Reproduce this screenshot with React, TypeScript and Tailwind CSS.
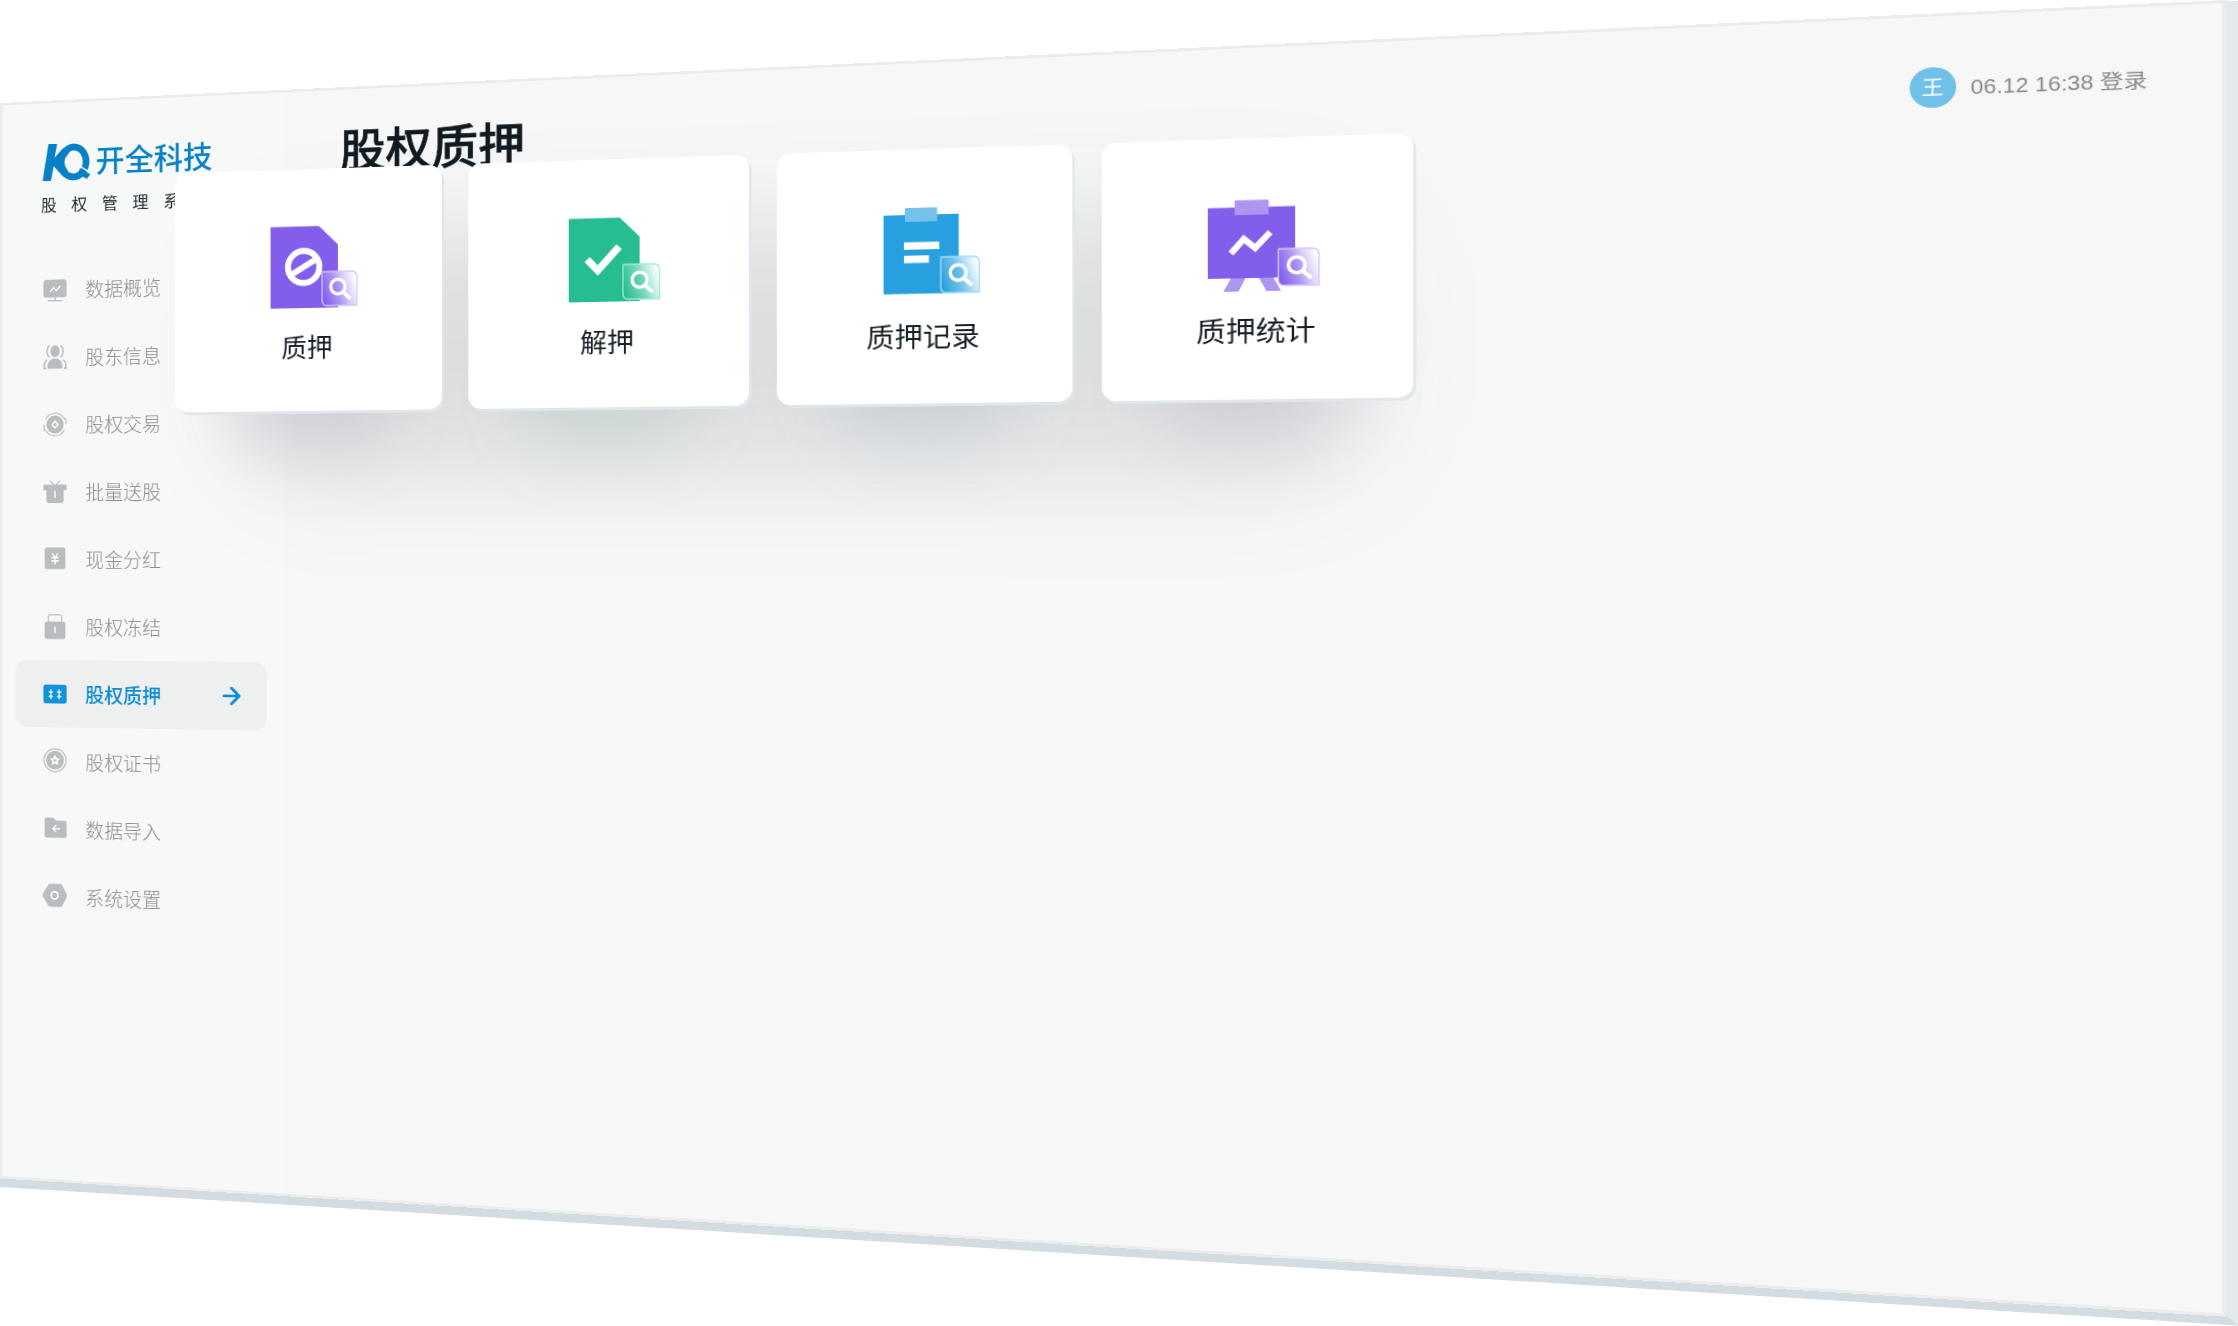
import React from "react";

const font = "font-['Liberation_Sans','Noto_Sans_CJK_SC',sans-serif]";

/* Projects a w×h plane onto a trapezoid whose left and right sides are vertical. */
function project(
  w: number,
  h: number,
  x0: number,
  x1: number,
  left: [number, number],
  right: [number, number]
) {
  const hl = left[1] - left[0];
  const k = hl / (right[1] - right[0]);
  const p = -(1 - k) / w;
  const a = ((x1 - x0) * k) / w + x0 * p;
  const b = (k * right[0] - left[0]) / w;
  return `matrix3d(${a},${b},0,${p},0,${hl / h},0,0,0,0,1,0,${x0},${left[0]},0,1)`;
}

const G = "#b9bdc0";

function MenuIcon({ name }: { name: string }) {
  return (
    <svg viewBox="0 0 28 28" className="h-7 w-7 shrink-0 overflow-visible">
      {name === "数据概览" && (
        <>
          <rect x="0" y="2" width="28" height="21" rx="3.500" fill={G} />
          <path d="M5 26.700H23M14 22V27" stroke={G} strokeWidth="1.600" />
          <path d="M8 16L12.500 11.500L15.500 15L20.500 9.500" stroke="#fff" strokeWidth="1.600" fill="none" />
        </>
      )}
      {name === "股东信息" && (
        <>
          <ellipse cx="14" cy="7" rx="5.600" ry="7" fill={G} />
          <path d="M4.800 27.500V25Q5.500 15.500 14 15.500Q22.500 15.500 23.200 25V27.500Z" fill={G} />
          <path d="M7.500 .5C3 3 3 11 7.500 14M20.500 .5C25 3 25 11 20.500 14M4.500 17C1 19 .5 23 .8 27H3M23.500 17C27 19 27.500 23 27.200 27H25" stroke={G} strokeWidth="1.900" fill="none" />
        </>
      )}
      {name === "股权交易" && (
        <>
          <circle cx="14" cy="14" r="10.500" fill={G} />
          <path d="M2.500 7.500A13.300 13.300 0 0 1 25.500 7.500M25.500 20.500A13.300 13.300 0 0 1 2.500 20.500M.8 14V20.500H3M27.200 14V7.500H25" stroke={G} strokeWidth="1.400" fill="none" />
          <path d="M14 10.300L17.700 14L14 17.700L10.300 14Z" stroke="#fff" strokeWidth="1.700" fill="none" />
        </>
      )}
      {name === "批量送股" && (
        <>
          <path d="M8 1L13 6M20 1L15 6" stroke={G} strokeWidth="1.600" />
          <path d="M1 5.500H27Q28 5.500 28 6.500V11Q28 12 27 12H24.500V24Q24.500 27 21.500 27H6.500Q3.500 27 3.500 24V12H1Q0 12 0 11V6.500Q0 5.500 1 5.500Z" fill={G} />
          <path d="M14 12.500V21" stroke="#fff" strokeWidth="1.500" />
        </>
      )}
      {name === "现金分红" && (
        <>
          <rect x="1.500" y="0" width="25" height="25.500" rx="3" fill={G} />
          <path d="M10.500 7L14 12L17.500 7M9.500 12.200H18.500M9.500 15.800H18.500M14 12V20" stroke="#fff" strokeWidth="1.700" fill="none" />
        </>
      )}
      {name === "股权冻结" && (
        <>
          <path d="M6 9V3Q6 0 9 0H19Q22 0 22 3V9" stroke={G} strokeWidth="1.400" fill="none" />
          <rect x="1.500" y="8" width="25" height="20.500" rx="3" fill={G} />
          <path d="M14 14V21.500" stroke="#fff" strokeWidth="1.500" />
        </>
      )}
      {name === "股权质押" && (
        <>
          <rect x="0" y="3" width="28" height="22" rx="3" fill="#1292da" />
          <path d="M9 8.500V20M19 8.500V20M6.500 11L9 13L11.500 11M6.500 17.500L9 15.500L11.500 17.500M16.500 11L19 13L21.500 11M16.500 17.500L19 15.500L21.500 17.500" stroke="#fff" strokeWidth="1.400" fill="none" />
        </>
      )}
      {name === "股权证书" && (
        <>
          <circle cx="14" cy="12.500" r="13.300" fill="none" stroke={G} strokeWidth="1.400" />
          <circle cx="14" cy="12.500" r="10.800" fill={G} />
          <path d="M14 8.300L15.300 11L18.200 11.400L16.100 13.500L16.600 16.500L14 15.100L11.400 16.500L11.900 13.500L9.800 11.400L12.700 11Z" stroke="#fff" strokeWidth="1.900" fill="none" />
        </>
      )}
      {name === "数据导入" && (
        <>
          <path d="M1.500 3.500Q1.500 1 4 1H11Q12.500 1 13.500 2.500L15 4.300H25Q28 4.300 28 7V21.500Q28 24.500 25 24.500H4.500Q1.500 24.500 1.500 21.500Z" fill={G} />
          <path d="M20 13.800H12M15.500 9.800L11.500 13.800L15.500 17.800" stroke="#fff" strokeWidth="1.600" fill="none" />
        </>
      )}
      {name === "系统设置" && (
        <>
          <path d="M8 -.5H20.500Q22 -.5 22.800 1L28 11Q28.800 13 28 15L22.800 25Q22 26.500 20.500 26.500H8Q6.500 26.500 5.700 25L-.5 15Q-1.500 13 -.5 11L5.700 1Q6.500 -.5 8 -.5Z" fill={G} />
          <circle cx="13.500" cy="13" r="4.200" stroke="#fff" strokeWidth="2" fill="none" />
        </>
      )}
    </svg>
  );
}

const menu = ["数据概览", "股东信息", "股权交易", "批量送股", "现金分红", "股权冻结", "股权质押", "股权证书", "数据导入", "系统设置"];

function Sidebar() {
  return (
    <aside className="flex w-[334px] shrink-0 flex-col bg-[#f7f9f8] pt-[44px]">
      <div className="flex h-[52px] items-center pl-[49px]">
        <svg viewBox="0 0 57 44" className="h-[44px] w-[57px] overflow-visible">
          <path d="M7 0H17.500L14.500 16L25 5L33 10L24 21L31 33L25 39L13.500 26L10 43H0Z" fill="#0680c7" />
          <ellipse cx="37.500" cy="22" rx="15" ry="17.500" fill="none" stroke="#0680c7" strokeWidth="8" />
          <path d="M46 28L58 35.500" stroke="#f7f9f8" strokeWidth="1.500" />
          <path d="M45 29.500L57.500 37L53.500 42.500L43 36Z" fill="#0680c7" />
        </svg>
        <span className="mt-[2px] ml-[7px] text-[34.700px] leading-none font-medium whitespace-nowrap text-[#0680c7]">开全科技</span>
      </div>
      <div className="mt-[13px] pl-[47px] text-[19px] leading-[24px] tracking-[17.700px] whitespace-nowrap text-[#1d262c]">股权管理系统</div>
      <nav className="mt-[46px] flex flex-col pl-[16px]">
        {menu.map((m) => {
          const on = m === "股权质押";
          return (
            <div key={m} className={on ? "flex h-[79px] w-[299px] items-center rounded-[14px] bg-[#eeefef] pl-[34px]" : "flex h-[79px] w-[299px] items-center pl-[34px]"}>
              <MenuIcon name={m} />
              <span className={on ? "mt-[3px] ml-[22.500px] text-[22.700px] leading-none font-medium whitespace-nowrap text-[#0c8bd6]" : "mt-[3px] ml-[22.500px] text-[22.700px] leading-none font-light whitespace-nowrap text-[#8a8d8e]"}>{m}</span>
              {on && (
                <svg viewBox="0 0 22 22" className="ml-[71.500px] h-[22px] w-[22px]">
                  <path d="M2 10.500H19M11 1.500L20 10.500L11 19.500" fill="none" stroke="#0c8bd6" strokeWidth="3.200" strokeLinecap="round" strokeLinejoin="round" />
                </svg>
              )}
            </div>
          );
        })}
      </nav>
    </aside>
  );
}

type Tone = { main: string; soft: string; edge: string };
const purple: Tone = { main: "#825eeb", soft: "#ad95f1", edge: "#d5c8fa" };
const green: Tone = { main: "#26bd93", soft: "#7fdcc0", edge: "#a5e8d3" };
const blue: Tone = { main: "#28a0df", soft: "#74c1e9", edge: "#a5dcf6" };

const cards = [
  { label: "质押", tone: purple, id: "a", glow: "bg-[#75688f]/14", shift: "-ml-[3px]" },
  { label: "解押", tone: green, id: "b", glow: "bg-[#5f9484]/14", shift: "-ml-[4px]" },
  { label: "质押记录", tone: blue, id: "c", glow: "bg-[#5f809a]/14", shift: "-ml-[2px]" },
  { label: "质押统计", tone: purple, id: "d", glow: "bg-[#75688f]/14", shift: "-ml-[1px]" },
];

function CardIcon({ id, tone }: { id: string; tone: Tone }) {
  return (
    <svg viewBox="0 0 120 100" className="h-[100px] w-[120px] overflow-visible">
      <defs>
        <linearGradient id={"g" + id} x1="0" y1=".65" x2="1" y2=".35">
          <stop offset="0" stopColor={tone.main} />
          <stop offset=".3" stopColor={tone.main} stopOpacity=".75" />
          <stop offset=".65" stopColor={tone.edge} />
          <stop offset="1" stopColor="#fff" />
        </linearGradient>
      </defs>
      {(id === "a" || id === "b") && <path d="M22 10.500H74.500L95 30.500V97H22Z" fill={tone.main} />}
      {id === "a" && (
        <g stroke="#fff" strokeWidth="6.500" fill="none">
          <circle cx="58" cy="53.500" r="17" />
          <path d="M44.500 61.500L71.500 45.500" />
        </g>
      )}
      {id === "b" && <path d="M41 53L52 64.500L74 40.500" stroke="#fff" strokeWidth="7.500" fill="none" />}
      {id === "c" && (
        <>
          <path d="M22 16H95.500V95.500H22Z" fill={tone.main} />
          <path d="M43 9H74.500V23H43Z" fill={tone.soft} />
          <path d="M42 43.500H76.500V51H42ZM42 57H66.500V64.500H42Z" fill="#fff" />
        </>
      )}
      {id === "d" && (
        <>
          <path d="M37.500 87H51L44.500 100H30.500ZM63.500 87H77L84 100H70.500Z" fill={tone.soft} />
          <path d="M16 17.500H97V87H16Z" fill={tone.main} />
          <path d="M41 10.500H72.500V25H41Z" fill={tone.soft} />
          <path d="M37.500 62.500L49.500 48.500L60 57.500L74 42.500" stroke="#fff" strokeWidth="6" fill="none" />
        </>
      )}
      <g transform={id === "d" ? "translate(3.5 .5)" : "translate(0 .5)"}>
        <path d="M79 58.500H109Q115.500 58.500 115.500 65V94.500H84Q78 94.500 78 88.500V59.500Q78 58.500 79 58.500Z" fill="#fff" />
        <path d="M79 58.500H109Q115.500 58.500 115.500 65V94.500H84Q78 94.500 78 88.500V59.500Q78 58.500 79 58.500Z" fill={`url(#g${id})`} stroke={tone.edge} strokeWidth="1.300" />
        <circle cx="95" cy="74.500" r="7.700" fill={tone.main} fillOpacity=".25" stroke="#fff" strokeWidth="3.400" />
        <path d="M100.500 80.500L108.500 87.500" stroke="#fff" strokeWidth="3.800" />
      </g>
    </svg>
  );
}

export default function App() {
  return (
    <div className={`relative h-[1326px] w-[2238px] overflow-hidden bg-white ${font}`}>
      <div className="absolute inset-0 bg-[#e4e9ec] [clip-path:polygon(2224px_1px,2238px_1px,2238px_1326px,2224px_1316px)]" />
      <div className="absolute inset-0 bg-[#d3dce0] [clip-path:polygon(0_1176px,2226px_1315px,2238px_1325.500px,0_1187px)]" />

      <div
        className="absolute top-0 left-0 flex h-[1268px] w-[2226px] origin-top-left border-[3.500px] border-[#ebedec] bg-[#f7f7f7]"
        style={{ transform: project(2226, 1268, 0, 2226, [103, 1178.5], [0, 1317]) }}
      >
        <Sidebar />
        <main className="flex grow items-start justify-between pt-[40px] pr-[61.500px] pl-[65.500px]">
          <h1 className="mt-[1px] text-[52px] leading-[60px] font-medium text-[#101a20] [-webkit-text-stroke:0.600px_#101a20]">股权质押</h1>
          <div className="flex h-[60px] items-center">
            <span className="flex h-10 w-10 items-center justify-center rounded-full bg-[#6fc1ea] text-[19px] leading-none text-white">王</span>
            <span className="mt-[4px] ml-[12.500px] text-[19.600px] leading-none whitespace-nowrap text-[#858889]">06.12 16:38 登录</span>
          </div>
        </main>
      </div>

      <div
        className="absolute top-0 left-0 isolate flex h-[256px] w-[1240px] origin-top-left gap-7"
        style={{ transform: project(1240, 256, 175, 1413.5, [173.5, 412.5], [133, 397.5]) }}
      >
        <div className="absolute top-[75px] right-[50px] left-[70px] -z-10 h-[250px] rounded-[80px] bg-[#282d3a]/13 blur-[54px]" />
        {cards.map((c) => (
          <section key={c.id} className="relative w-[289px]">
            <div className={`absolute top-[190px] left-[55px] -z-10 h-[110px] w-[180px] rounded-full blur-[34px] ${c.glow}`} />
            <div className="flex h-full flex-col items-center rounded-[14px] bg-white pt-[50px] shadow-[2.500px_3px_0_#e0e7eb]">
              <div className={c.shift}>
                <CardIcon id={c.id} tone={c.tone} />
              </div>
              <span className="mt-[20px] text-[27.700px] leading-[40px] whitespace-nowrap text-[#171f25]">{c.label}</span>
            </div>
          </section>
        ))}
      </div>
    </div>
  );
}
